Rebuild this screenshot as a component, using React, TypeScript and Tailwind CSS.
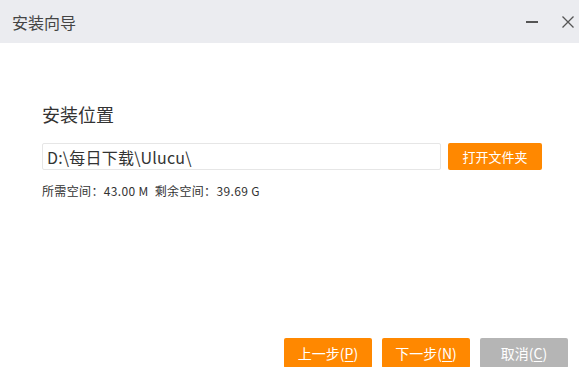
const font = { fontFamily: '"Noto Sans CJK SC", "Noto Sans", sans-serif' };

const Btn = ({ label, hotkey, gray }: { label: string; hotkey: string; gray?: boolean }) => (
  <button
    className={`h-[30px] w-[88px] rounded-[2px] text-[14px] text-white leading-none flex items-center justify-center ${gray ? "bg-[#b5b5b5]" : "bg-[#ff8800]"}`}
  >
    {label}(<span className="underline underline-offset-2">{hotkey}</span>)
  </button>
);

export default function App() {
  return (
    <div className="h-screen w-full overflow-hidden bg-white flex flex-col text-[#333]" style={font}>
      {/* title bar */}
      <div className="h-[43px] shrink-0 bg-[#ebecf0] flex items-center pl-[12px] pr-[5px]">
        <span className="text-[16px] text-[#444] leading-none">安装向导</span>
        <div className="ml-auto flex items-center gap-[24px]">
          <div className="w-[12px] h-[2px] bg-[#555]" />
          <svg width="12" height="12" viewBox="0 0 12 12">
            <path d="M0.5 0.5 L11.5 11.5 M11.5 0.5 L0.5 11.5" stroke="#555" strokeWidth="1.3" />
          </svg>
        </div>
      </div>

      {/* content */}
      <div className="pl-[42px] pt-[59px]">
        <div className="text-[18px] leading-[24px] text-[#333]">安装位置</div>
        <div className="mt-[17px] flex items-center gap-[7px]">
          <div className="h-[27px] w-[399px] border border-[#e6e6e6] rounded-[2px] flex items-center pl-[4px] text-[16px] tracking-[0.2px] text-[#333]">
            D:\每日下载\Ulucu\
          </div>
          <button className="h-[27px] w-[94px] rounded-[2px] bg-[#ff8800] text-white text-[13px] leading-none">
            打开文件夹
          </button>
        </div>
        <div className="mt-[13px] text-[12px] leading-[16px] tracking-[0.35px] text-[#333]">
          所需空间：43.00 M&nbsp;&nbsp;剩余空间：39.69 G
        </div>
      </div>

      {/* footer */}
      <div className="mt-auto flex justify-end gap-[10px] pr-[11px] -mb-[1px]">
        <Btn label="上一步" hotkey="P" />
        <Btn label="下一步" hotkey="N" />
        <Btn label="取消" hotkey="C" gray />
      </div>
    </div>
  );
}
